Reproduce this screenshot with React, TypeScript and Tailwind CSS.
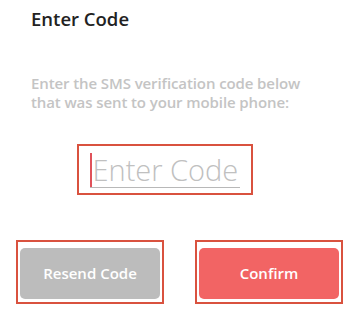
export default function App() {
  return (
    <div
      className="w-[360px] h-[313px] bg-white overflow-hidden"
      style={{ fontFamily: "'Open Sans', Lato, sans-serif" }}
    >
      <h1 className="pl-[31px] pt-[6px] text-[18.5px] leading-[26px] font-semibold text-[#222222]">
        Enter Code
      </h1>

      <p className="pl-[31px] pr-[45px] mt-[42px] text-[15px] leading-[19px] font-semibold text-[#c4c4c4] tracking-[-0.1px]">
        Enter the SMS verification code below that was sent to your mobile phone:
      </p>

      <div className="flex mt-[32px] pl-[77px]">
        <div className="w-[176px] h-[51px] border-2 border-[#d9523f] pl-[11px] pt-[6px]">
          <div className="flex items-end w-[150px] h-[36px] border-b border-[#b8b8b8]">
            <span className="w-[1.5px] h-[34px] bg-[#e0525a]" />
            <span className="ml-[1px] text-[29px] leading-[34px] font-light text-[#c0c0c0]">
              Enter Code
            </span>
          </div>
        </div>
      </div>

      <div className="flex justify-between px-[16px] mt-[45px]">
        <div className="border-2 border-[#d9523f] px-[2px] pt-[6px] pb-[3px]">
          <button className="w-[140px] h-[51px] rounded-[5px] bg-[#bcbcbc] text-white text-[15px] font-semibold">
            Resend Code
          </button>
        </div>
        <div className="border-2 border-[#d9523f] px-[2px] pt-[6px] pb-[3px] mr-[1px]">
          <button className="w-[140px] h-[51px] rounded-[5px] bg-[#f26464] text-white text-[15px] font-semibold">
            Confirm
          </button>
        </div>
      </div>
    </div>
  );
}
